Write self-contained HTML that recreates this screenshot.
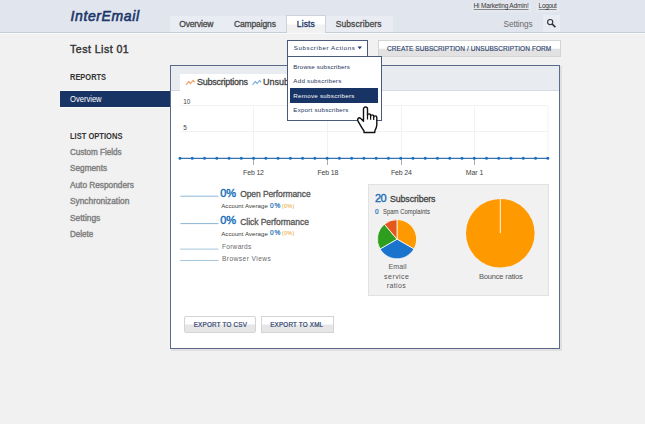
<!DOCTYPE html>
<html><head><meta charset="utf-8"><style>
html,body{margin:0;padding:0;}
body{width:645px;height:424px;position:relative;overflow:hidden;background:#f1f1f1;font-family:"Liberation Sans",sans-serif;}
.a{position:absolute;box-sizing:border-box;}
.tx{position:absolute;white-space:nowrap;}
</style></head><body>
<div class="a" style="left:0;top:0;width:645px;height:32px;background:#e1e5ee;"></div>
<div class="a" style="left:0;top:32px;width:645px;height:1px;background:#c6cdd5;"></div><div class="a" style="left:0;top:33px;width:645px;height:1px;background:#f8f9f9;"></div>
<div class="a" style="left:170px;top:16px;width:117px;height:16px;background:#e9ecf2;"></div>
<div class="a" style="left:326px;top:16px;width:67px;height:16px;background:#e9ecf2;"></div>
<div class="a" style="left:286px;top:15px;width:40px;height:18px;background:linear-gradient(#ffffff 0%,#ffffff 45%,#f1f1f1 55%,#f1f1f1 100%);border:1px solid #cdd3dc;border-bottom:none;"></div>
<div class="a" style="left:472px;top:3px;width:59px;height:9px;background:#e6e9f0;"></div>
<div class="a" style="left:536px;top:3px;width:23px;height:9px;background:#e6e9f0;"></div>
<div class="a" style="left:543px;top:15px;width:17px;height:17px;background:#e9ecf2;"></div>
<svg class="a" style="left:543px;top:15px" width="17" height="17"><circle cx="7.2" cy="7.1" r="2.6" fill="none" stroke="#333" stroke-width="1.1"/><line x1="9.1" y1="9.0" x2="12.4" y2="12.2" stroke="#333" stroke-width="1.7"/></svg>

<div class="a" style="left:60px;top:90px;width:112px;height:18px;background:#fbfbfb;"></div><div class="a" style="left:60px;top:91px;width:112px;height:16px;background:#173465;"></div>

<!-- panel -->
<div class="a" style="left:171px;top:66px;width:391px;height:285px;background:rgba(0,0,0,0.07);"></div>
<div class="a" style="left:170px;top:65px;width:390px;height:284px;background:#fff;border:1px solid #5a6a88;"></div>
<div class="a" style="left:171px;top:66px;width:388px;height:25px;background:#e8ebf0;border-bottom:1px solid #d6dbe3;"></div>
<div class="a" style="left:180px;top:74px;width:200px;height:17px;background:#fff;"></div>
<svg class="a" style="left:0;top:0" width="645" height="424">
<line x1="180" y1="105.5" x2="548" y2="105.5" stroke="#f2f2f2"/>
<line x1="180" y1="131.5" x2="548" y2="131.5" stroke="#f2f2f2"/>
<line x1="253.5" y1="105.5" x2="253.5" y2="158" stroke="#f2f2f2" stroke-width="1"/><line x1="327.5" y1="105.5" x2="327.5" y2="158" stroke="#f2f2f2" stroke-width="1"/><line x1="401.5" y1="105.5" x2="401.5" y2="158" stroke="#f2f2f2" stroke-width="1"/><line x1="474.5" y1="105.5" x2="474.5" y2="158" stroke="#f2f2f2" stroke-width="1"/><line x1="548" y1="105.5" x2="548" y2="158" stroke="#f2f2f2" stroke-width="1"/>
<polyline points="186,84.8 188.6,81.5 190.6,83.5 193,80.3 194.6,82.3" fill="none" stroke="#f2a068" stroke-width="1.2" stroke-linejoin="round"/>
<polyline points="252.6,84.8 255.2,81.5 257.2,83.5 259.6,80.3 261.1,82.3" fill="none" stroke="#7ab0e0" stroke-width="1.2" stroke-linejoin="round"/>
<line x1="180" y1="158.3" x2="548.7" y2="158.3" stroke="#3574b0" stroke-width="1.2"/>
<line x1="253.5" y1="158" x2="253.5" y2="165" stroke="#aaa" stroke-width="1"/><line x1="327.5" y1="158" x2="327.5" y2="165" stroke="#aaa" stroke-width="1"/><line x1="401.5" y1="158" x2="401.5" y2="165" stroke="#aaa" stroke-width="1"/><line x1="474.5" y1="158" x2="474.5" y2="165" stroke="#aaa" stroke-width="1"/>
<g fill="#1a6fc0"><circle cx="180.00" cy="158.3" r="1.5"/><circle cx="192.26" cy="158.3" r="1.5"/><circle cx="204.52" cy="158.3" r="1.5"/><circle cx="216.78" cy="158.3" r="1.5"/><circle cx="229.04" cy="158.3" r="1.5"/><circle cx="241.30" cy="158.3" r="1.5"/><circle cx="253.56" cy="158.3" r="1.5"/><circle cx="265.82" cy="158.3" r="1.5"/><circle cx="278.08" cy="158.3" r="1.5"/><circle cx="290.34" cy="158.3" r="1.5"/><circle cx="302.60" cy="158.3" r="1.5"/><circle cx="314.86" cy="158.3" r="1.5"/><circle cx="327.12" cy="158.3" r="1.5"/><circle cx="339.38" cy="158.3" r="1.5"/><circle cx="351.64" cy="158.3" r="1.5"/><circle cx="363.90" cy="158.3" r="1.5"/><circle cx="376.16" cy="158.3" r="1.5"/><circle cx="388.42" cy="158.3" r="1.5"/><circle cx="400.68" cy="158.3" r="1.5"/><circle cx="412.94" cy="158.3" r="1.5"/><circle cx="425.20" cy="158.3" r="1.5"/><circle cx="437.46" cy="158.3" r="1.5"/><circle cx="449.72" cy="158.3" r="1.5"/><circle cx="461.98" cy="158.3" r="1.5"/><circle cx="474.24" cy="158.3" r="1.5"/><circle cx="486.50" cy="158.3" r="1.5"/><circle cx="498.76" cy="158.3" r="1.5"/><circle cx="511.02" cy="158.3" r="1.5"/><circle cx="523.28" cy="158.3" r="1.5"/><circle cx="535.54" cy="158.3" r="1.5"/><circle cx="547.80" cy="158.3" r="1.5"/></g>
<line x1="180.4" y1="196.2" x2="218.4" y2="196.2" stroke="#8ab8d8" stroke-width="1"/>
<line x1="180.4" y1="223.6" x2="218.4" y2="223.6" stroke="#8ab8d8" stroke-width="1"/>
<line x1="180.1" y1="249.1" x2="218.5" y2="249.1" stroke="#a8c8e0" stroke-width="1"/>
<line x1="180.1" y1="260.5" x2="218.5" y2="260.5" stroke="#a8c8e0" stroke-width="1"/>
</svg>
<div class="a" style="left:368px;top:184px;width:181px;height:112px;background:#f1f1f1;border:1px solid #e2e2e2;"></div>
<svg class="a" style="left:0;top:0" width="645" height="424">
<path d="M397,239.2 L397.00,219.60 A19.6,19.6 0 0 1 413.97,249.00 Z" fill="#ff9900" stroke="#fff" stroke-width="0.8"/><path d="M397,239.2 L413.97,249.00 A19.6,19.6 0 0 1 380.03,249.00 Z" fill="#1a73cc" stroke="#fff" stroke-width="0.8"/><path d="M397,239.2 L380.03,249.00 A19.6,19.6 0 0 1 384.40,224.19 Z" fill="#2e9e1e" stroke="#fff" stroke-width="0.8"/><path d="M397,239.2 L384.40,224.19 A19.6,19.6 0 0 1 397.00,219.60 Z" fill="#e5581c" stroke="#fff" stroke-width="0.8"/>
<circle cx="500.3" cy="233.2" r="34.3" fill="#ff9900"/>
<line x1="500.3" y1="199" x2="500.3" y2="233.2" stroke="#fff" stroke-width="0.9"/>
</svg>
<div class="a" style="left:184px;top:316px;width:72px;height:17px;background:linear-gradient(#ffffff 0%,#ffffff 45%,#e6e6e6 55%,#e6e6e6 100%);border:1px solid #d4d4d4;border-radius:2px;"></div>
<div class="a" style="left:261px;top:316px;width:73px;height:17px;background:linear-gradient(#ffffff 0%,#ffffff 45%,#e6e6e6 55%,#e6e6e6 100%);border:1px solid #d4d4d4;"></div>

<!-- top buttons -->
<div class="a" style="left:287px;top:40px;width:81px;height:17px;background:#fff;border:1px solid #4a5a7a;"></div>
<svg class="a" style="left:357px;top:46px" width="6" height="4"><path d="M0.5 0.5 L5 0.5 L2.75 3.2 Z" fill="#1b3769"/></svg>
<div class="a" style="left:378px;top:40px;width:183px;height:17px;background:linear-gradient(#ffffff 0%,#ffffff 48%,#e2e2e2 55%,#e2e2e2 100%);border:1px solid #d4d4d4;"></div>
<div class="a" style="left:287px;top:56px;width:95px;height:65px;background:#fff;border:1px solid #4a5a7a;z-index:10;"></div>
<div class="a" style="left:290px;top:88px;width:88px;height:15px;background:#173465;z-index:10;"></div>

<div class="tx" style="left:70.50px;top:9.35px;font-size:14px;line-height:14px;color:#1b3769;-webkit-text-stroke:0.6px #1b3769;font-style:italic;letter-spacing:0.611px;">InterEmail</div><div class="tx" style="left:179.30px;top:20.10px;font-size:8.5px;line-height:8.5px;color:#4a4a4a;-webkit-text-stroke:0.3px #4a4a4a;letter-spacing:-0.200px;">Overview</div><div class="tx" style="left:233.90px;top:20.10px;font-size:8.5px;line-height:8.5px;color:#4a4a4a;-webkit-text-stroke:0.3px #4a4a4a;letter-spacing:-0.112px;">Campaigns</div><div class="tx" style="left:296.80px;top:20.10px;font-size:8.5px;line-height:8.5px;color:#1b3769;-webkit-text-stroke:0.3px #1b3769;letter-spacing:0.125px;">Lists</div><div class="tx" style="left:335.70px;top:20.10px;font-size:8.5px;line-height:8.5px;color:#4a4a4a;-webkit-text-stroke:0.3px #4a4a4a;letter-spacing:0.090px;">Subscribers</div><div class="tx" style="left:473.60px;top:3.40px;font-size:6.5px;line-height:6.5px;color:#333;letter-spacing:-0.167px;text-decoration:underline;text-decoration-color:#888;text-decoration-skip-ink:none;">Hi Marketing Admin!</div><div class="tx" style="left:538.60px;top:3.40px;font-size:6.5px;line-height:6.5px;color:#333;letter-spacing:-0.320px;text-decoration:underline;text-decoration-color:#888;text-decoration-skip-ink:none;">Logout</div><div class="tx" style="left:503.60px;top:20.96px;font-size:8.2px;line-height:8.2px;color:#6a6a6a;letter-spacing:-0.086px;">Settings</div><div class="tx" style="left:70.10px;top:43.73px;font-size:10.6px;line-height:10.6px;color:#333;-webkit-text-stroke:0.4px #333;letter-spacing:0.455px;">Test List 01</div><div class="tx" style="left:69.70px;top:73.30px;font-size:8.5px;line-height:8.5px;color:#333;font-weight:bold;transform:scaleX(0.8780);transform-origin:0 0;">REPORTS</div><div class="tx" style="left:70.00px;top:94.78px;font-size:9px;line-height:9px;color:#fff;transform:scaleX(0.8421);transform-origin:0 0;">Overview</div><div class="tx" style="left:69.70px;top:131.80px;font-size:8.5px;line-height:8.5px;color:#333;font-weight:bold;transform:scaleX(0.8881);transform-origin:0 0;">LIST OPTIONS</div><div class="tx" style="left:69.70px;top:147.60px;font-size:8.5px;line-height:8.5px;color:#808080;-webkit-text-stroke:0.4px #808080;transform:scaleX(0.9491);transform-origin:0 0;">Custom Fields</div><div class="tx" style="left:69.70px;top:164.10px;font-size:8.5px;line-height:8.5px;color:#808080;-webkit-text-stroke:0.4px #808080;transform:scaleX(0.9692);transform-origin:0 0;">Segments</div><div class="tx" style="left:69.70px;top:180.60px;font-size:8.5px;line-height:8.5px;color:#808080;-webkit-text-stroke:0.4px #808080;transform:scaleX(0.9727);transform-origin:0 0;">Auto Responders</div><div class="tx" style="left:69.70px;top:197.10px;font-size:8.5px;line-height:8.5px;color:#808080;-webkit-text-stroke:0.4px #808080;transform:scaleX(0.9803);transform-origin:0 0;">Synchronization</div><div class="tx" style="left:69.70px;top:213.60px;font-size:8.5px;line-height:8.5px;color:#808080;-webkit-text-stroke:0.4px #808080;transform:scaleX(0.9871);transform-origin:0 0;">Settings</div><div class="tx" style="left:69.70px;top:230.10px;font-size:8.5px;line-height:8.5px;color:#808080;-webkit-text-stroke:0.4px #808080;transform:scaleX(0.9440);transform-origin:0 0;">Delete</div><div class="tx" style="left:293.70px;top:45.15px;font-size:6.2px;line-height:6.2px;color:#22325a;letter-spacing:0.588px;">Subscriber Actions</div><div class="tx" style="left:387.00px;top:45.60px;font-size:6.5px;line-height:6.5px;color:#2f4470;-webkit-text-stroke:0.15px #2f4470;letter-spacing:0.083px;">CREATE SUBSCRIPTION / UNSUBSCRIPTION FORM</div><div class="tx" style="left:293.30px;top:63.95px;font-size:6.2px;line-height:6.2px;color:#22325a;letter-spacing:0.153px;z-index:11;">Browse subscribers</div><div class="tx" style="left:293.30px;top:78.25px;font-size:6.2px;line-height:6.2px;color:#22325a;letter-spacing:0.257px;z-index:11;">Add subscribers</div><div class="tx" style="left:293.30px;top:92.85px;font-size:6.2px;line-height:6.2px;color:#ffffff;letter-spacing:0.276px;z-index:11;">Remove subscribers</div><div class="tx" style="left:293.30px;top:107.25px;font-size:6.2px;line-height:6.2px;color:#22325a;letter-spacing:0.229px;z-index:11;">Export subscribers</div><div class="tx" style="left:197.00px;top:77.58px;font-size:9px;line-height:9px;color:#444;-webkit-text-stroke:0.3px #444;letter-spacing:-0.250px;">Subscriptions</div><div class="tx" style="left:262.90px;top:77.58px;font-size:9px;line-height:9px;color:#444;-webkit-text-stroke:0.3px #444;">Unsubscriptions</div><div class="tx" style="left:183.20px;top:98.50px;font-size:6.5px;line-height:6.5px;color:#444;letter-spacing:0.000px;">10</div><div class="tx" style="left:183.20px;top:124.70px;font-size:6.5px;line-height:6.5px;color:#444;letter-spacing:-0.500px;">5</div><div class="tx" style="left:243.10px;top:168.87px;font-size:7px;line-height:7px;color:#444;letter-spacing:-0.180px;">Feb 12</div><div class="tx" style="left:317.50px;top:168.87px;font-size:7px;line-height:7px;color:#444;letter-spacing:-0.180px;">Feb 18</div><div class="tx" style="left:391.00px;top:168.87px;font-size:7px;line-height:7px;color:#444;letter-spacing:-0.180px;">Feb 24</div><div class="tx" style="left:465.70px;top:168.87px;font-size:7px;line-height:7px;color:#444;letter-spacing:-0.025px;">Mar 1</div><div class="tx" style="left:220.30px;top:187.79px;font-size:11px;line-height:11px;color:#1a70b8;-webkit-text-stroke:0.45px #1a70b8;letter-spacing:-0.100px;">0%</div><div class="tx" style="left:240.20px;top:190.20px;font-size:8.5px;line-height:8.5px;color:#555;-webkit-text-stroke:0.3px #555;letter-spacing:-0.093px;">Open Performance</div><div class="tx" style="left:220.30px;top:215.29px;font-size:11px;line-height:11px;color:#1a70b8;-webkit-text-stroke:0.45px #1a70b8;letter-spacing:-0.100px;">0%</div><div class="tx" style="left:240.20px;top:217.70px;font-size:8.5px;line-height:8.5px;color:#555;-webkit-text-stroke:0.3px #555;letter-spacing:-0.044px;">Click Performance</div><div class="tx" style="left:221.20px;top:203.44px;font-size:6.1px;line-height:6.1px;color:#3a3a3a;letter-spacing:0.050px;">Account Average</div><div class="tx" style="left:270.00px;top:203.10px;font-size:6.5px;line-height:6.5px;color:#1a70b8;-webkit-text-stroke:0.2px #1a70b8;letter-spacing:1.000px;">0%</div><div class="tx" style="left:281.80px;top:203.94px;font-size:5.5px;line-height:5.5px;color:#e8a020;letter-spacing:0.333px;">(0%)</div><div class="tx" style="left:221.20px;top:230.54px;font-size:6.1px;line-height:6.1px;color:#3a3a3a;letter-spacing:0.050px;">Account Average</div><div class="tx" style="left:270.00px;top:230.20px;font-size:6.5px;line-height:6.5px;color:#1a70b8;-webkit-text-stroke:0.2px #1a70b8;letter-spacing:1.000px;">0%</div><div class="tx" style="left:281.80px;top:231.04px;font-size:5.5px;line-height:5.5px;color:#e8a020;letter-spacing:0.333px;">(0%)</div><div class="tx" style="left:221.90px;top:244.01px;font-size:6.6px;line-height:6.6px;color:#6a6a6a;letter-spacing:0.271px;">Forwards</div><div class="tx" style="left:221.90px;top:255.81px;font-size:6.6px;line-height:6.6px;color:#6a6a6a;letter-spacing:0.458px;">Browser Views</div><div class="tx" style="left:374.90px;top:193.09px;font-size:11px;line-height:11px;color:#1a70b8;-webkit-text-stroke:0.4px #1a70b8;letter-spacing:-0.500px;">20</div><div class="tx" style="left:390.00px;top:194.95px;font-size:8.8px;line-height:8.8px;color:#444;-webkit-text-stroke:0.3px #444;letter-spacing:-0.100px;">Subscribers</div><div class="tx" style="left:374.90px;top:209.00px;font-size:6.5px;line-height:6.5px;color:#1a70b8;-webkit-text-stroke:0.2px #1a70b8;letter-spacing:-0.700px;">0</div><div class="tx" style="left:382.60px;top:209.08px;font-size:6.4px;line-height:6.4px;color:#444;transform:scaleX(0.9300);transform-origin:0 0;">Spam Complaints</div><div class="tx" style="left:388.60px;top:262.87px;font-size:7px;line-height:7px;color:#555;letter-spacing:0.100px;">Email</div><div class="tx" style="left:384.10px;top:272.67px;font-size:7px;line-height:7px;color:#555;letter-spacing:0.450px;">service</div><div class="tx" style="left:386.80px;top:282.37px;font-size:7px;line-height:7px;color:#555;letter-spacing:0.380px;">ratios</div><div class="tx" style="left:478.90px;top:272.75px;font-size:7.5px;line-height:7.5px;color:#555;letter-spacing:-0.158px;">Bounce ratios</div><div class="tx" style="left:193.70px;top:322.17px;font-size:6.3px;line-height:6.3px;color:#2f4470;-webkit-text-stroke:0.2px #2f4470;letter-spacing:0.217px;">EXPORT TO CSV</div><div class="tx" style="left:270.20px;top:322.17px;font-size:6.3px;line-height:6.3px;color:#2f4470;-webkit-text-stroke:0.2px #2f4470;letter-spacing:0.192px;">EXPORT TO XML</div>
<svg style="position:absolute;left:356px;top:105px;z-index:12" width="24" height="30" viewBox="-1 -1 24 30">
<path d="M6.5 15 L6.5 3 C6.5 0.3 10.5 0.3 10.5 3 L10.5 9.5 C10.5 7.3 13.6 7.3 13.6 9.5 L13.6 10.5 C13.6 8.3 16.7 8.3 16.7 10.5 L16.7 11.5 C16.7 9.3 19.8 9.3 19.8 11.5 L19.8 19 C19.8 21 18.8 23 17.8 25 L17.8 26.5 L7 26.5 L7 25 C5.2 22.5 2.8 18.5 1 15.2 C0 13.2 1.4 10.9 3.5 12.3 L6.5 15.2 Z" fill="#fff" stroke="#111" stroke-width="1.4" stroke-linejoin="round"/>
<path d="M10.5 9.5 L10.5 13.5 M13.6 10.5 L13.6 13.8 M16.7 11.5 L16.7 14" stroke="#111" stroke-width="1.2"/>
</svg>
</body></html>
